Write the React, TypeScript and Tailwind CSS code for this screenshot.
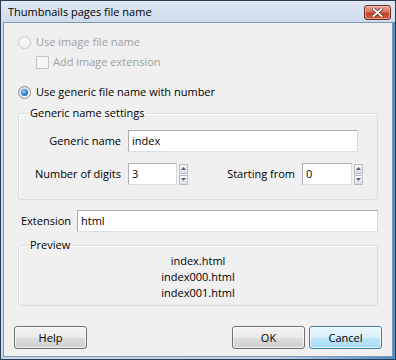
import React from "react";

function Radio({ checked, disabled }: { checked?: boolean; disabled?: boolean }) {
  return (
    <div
      className={
        "w-[13px] h-[13px] rounded-full border flex items-center justify-center shrink-0 " +
        (disabled
          ? "border-[#c9c9c9] bg-[#f4f4f4]"
          : "border-[#8e8f8f] bg-gradient-to-br from-[#d6d6d6] to-[#fcfcfc]")
      }
    >
      {checked && (
        <div className="w-[7px] h-[7px] rounded-full bg-[radial-gradient(circle_at_40%_35%,#8fd0ff_0%,#3d8ad8_45%,#1a4f95_100%)]" />
      )}
    </div>
  );
}

function Spin() {
  return (
    <div className="ml-[2px] flex flex-col gap-[1px]">
      <div className="w-[9px] h-[10px] border border-[#b9bec6] bg-gradient-to-b from-[#fafafa] to-[#dcdfe3] flex items-center justify-center">
        <svg width="5" height="3" viewBox="0 0 5 3">
          <path d="M0 3L2.5 0L5 3Z" fill="#4d6185" />
        </svg>
      </div>
      <div className="w-[9px] h-[10px] border border-[#b9bec6] bg-gradient-to-b from-[#fafafa] to-[#dcdfe3] flex items-center justify-center">
        <svg width="5" height="3" viewBox="0 0 5 3">
          <path d="M0 0L2.5 3L5 0Z" fill="#4d6185" />
        </svg>
      </div>
    </div>
  );
}

function Input({ value, className }: { value: string; className: string }) {
  return (
    <div
      className={
        "h-[22px] bg-white border border-[#abadb3] border-b-[#dbdfe6] border-r-[#d5d9e0] flex items-center pl-[3px] text-black " +
        className
      }
    >
      {value}
    </div>
  );
}

function Button({ label, def, className }: { label: string; def?: boolean; className?: string }) {
  return (
    <div
      className={
        "w-[73px] h-[23px] rounded-[3px] border flex items-center justify-center text-black shadow-[inset_0_0_0_1px_rgba(255,255,255,0.7)] " +
        (def
          ? "border-[#3c7fb1] bg-[linear-gradient(to_bottom,#eaf6fd_0%,#d9f0fc_50%,#bee6fd_51%,#a7d9f5_100%)] "
          : "border-[#707070] bg-[linear-gradient(to_bottom,#f2f2f2_0%,#ebebeb_50%,#dddddd_51%,#cfcfcf_100%)] ") +
        (className || "")
      }
    >
      {label}
    </div>
  );
}

export default function App() {
  return (
    <div className="w-[396px] h-[360px] border border-[#2d3c4f] bg-[linear-gradient(to_right,#c8d8ec_0%,#b9cfe8_70%,#4c8ccc_100%)] flex flex-col font-['Open_Sans',sans-serif] text-[11px] leading-4 text-black select-none">
      {/* Title bar */}
      <div className="h-[21px] flex items-center bg-[linear-gradient(to_bottom,#dfe8f4,#cfdcec)] pl-[7px] pr-[4px]">
        <div className="text-[11px] text-black">Thumbnails pages file name</div>
        <div className="flex-1" />
        <div className="w-[27px] h-[15px] mt-[1px] rounded-[3px] border border-[#6e2a22] bg-[linear-gradient(to_bottom,#e8a598_0%,#d7735f_45%,#c4412a_55%,#d06048_100%)] flex items-center justify-center shadow-[inset_0_0_0_1px_rgba(255,220,210,0.5)]">
          <svg width="11" height="9" viewBox="0 0 11 9">
            <path d="M1.5 1L9.5 8M9.5 1L1.5 8" stroke="#5a1d15" strokeWidth="3.4" strokeLinecap="round" />
            <path d="M1.5 1L9.5 8M9.5 1L1.5 8" stroke="#ffffff" strokeWidth="2" strokeLinecap="round" />
          </svg>
        </div>
      </div>
      {/* Client */}
      <div className="mx-[2px] h-[335px] border border-[#8196b0] bg-[#f0f0f0] flex flex-col">
        <div className="pt-[11px] pl-[14px] flex items-center h-[16px] box-content gap-[5px] text-[#a0a0a0]">
          <Radio disabled />
          <span>Use image file name</span>
        </div>
        <div className="mt-[4px] pl-[32px] flex items-center h-[16px] gap-[4px] text-[#a0a0a0]">
          <div className="w-[13px] h-[13px] border border-[#c5c5c5] bg-[#f6f6f6]" />
          <span>Add image extension</span>
        </div>
        <div className="mt-[14px] pl-[14px] flex items-center h-[16px] gap-[5px]">
          <Radio checked />
          <span>Use generic file name with number</span>
        </div>
        <fieldset className="mt-[5px] ml-[14px] w-[360px] border border-[#d5dfe5] rounded-[3px] shadow-[inset_1px_1px_0_#ffffff] pb-[14px]">
          <legend className="ml-[9px] px-[2px] leading-4">Generic name settings</legend>
          <div className="mt-[9px] flex items-center">
            <div className="w-[102px] text-right">Generic name</div>
            <Input value="index" className="ml-[7px] w-[230px]" />
          </div>
          <div className="mt-[11px] flex items-center">
            <div className="w-[102px] text-right">Number of digits</div>
            <Input value="3" className="ml-[7px] w-[49px]" />
            <Spin />
            <div className="w-[107px] text-right">Starting from</div>
            <Input value="0" className="ml-[7px] w-[50px]" />
            <Spin />
          </div>
        </fieldset>
        <div className="mt-[10px] pl-[17px] flex items-center">
          <div className="w-[56px]">Extension</div>
          <Input value="html" className="w-[301px]" />
        </div>
        <fieldset className="mt-[5px] ml-[14px] w-[360px] border border-[#d5dfe5] rounded-[3px] shadow-[inset_1px_1px_0_#ffffff] pb-[4px]">
          <legend className="ml-[9px] px-[2px] leading-4">Preview</legend>
          <div className="flex flex-col items-center">
            <div>index.html</div>
            <div>index000.html</div>
            <div>index001.html</div>
          </div>
        </fieldset>
        <div className="mt-[20px] px-[10px] flex items-center">
          <Button label="Help" />
          <div className="flex-1" />
          <Button label="OK" />
          <Button label="Cancel" def className="ml-[4px]" />
        </div>
      </div>
    </div>
  );
}
